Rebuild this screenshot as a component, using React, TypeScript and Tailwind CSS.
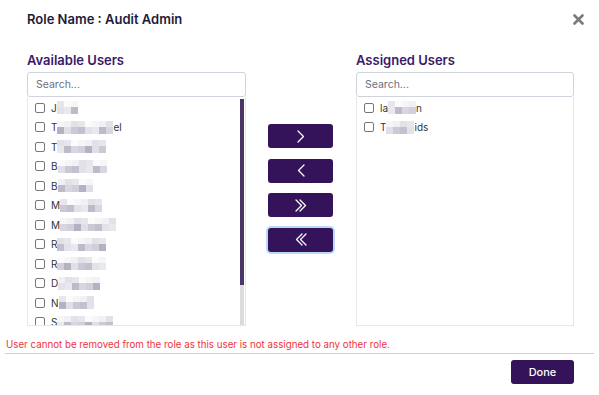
import React from "react";

const palette = ["#d2cfdb", "#e0dee6", "#c3c0cf", "#e9e8ee", "#d8d7e1", "#b5b1c3", "#ccc9d7", "#e3e2e9", "#bdbac9"];

function Mosaic({ cols, seed }: { cols: number; seed: number }) {
  const top: string[] = [];
  const bot: string[] = [];
  for (let i = 0; i < cols; i++) {
    top.push(["#f1f0f4", "#e8e6ed", "#f6f6f8", "#e3e1e8", "#fbfbfc"][(i * 3 + seed) % 5]);
    bot.push(palette[(i * 5 + seed * 7) % palette.length]);
  }
  return (
    <span className="inline-flex flex-col align-middle">
      <span className="flex">
        {top.map((c, i) => (
          <span key={i} className="block w-[7px] h-[6px]" style={{ background: c }} />
        ))}
      </span>
      <span className="flex">
        {bot.map((c, i) => (
          <span key={i} className="block w-[7px] h-[7px]" style={{ background: c }} />
        ))}
      </span>
    </span>
  );
}

function Box() {
  return <span className="block w-[10px] h-[10px] border border-[#767676] rounded-[2px] bg-white shrink-0" />;
}

type Row = { a: string; cols: number; tail?: string };

const left: Row[] = [
  { a: "J", cols: 3 },
  { a: "T", cols: 8, tail: "el" },
  { a: "T", cols: 7 },
  { a: "B", cols: 7 },
  { a: "B", cols: 5 },
  { a: "M", cols: 6 },
  { a: "M", cols: 8 },
  { a: "R", cols: 7 },
  { a: "R", cols: 7 },
  { a: "D", cols: 6 },
  { a: "N", cols: 5 },
  { a: "S", cols: 8 },
];

const right: Row[] = [
  { a: "la", cols: 4, tail: "n" },
  { a: "T", cols: 4, tail: "ids" },
];

function UserRow({ r, i }: { r: Row; i: number }) {
  return (
    <div className="flex items-center h-[19.5px] pl-[7px]">
      <Box />
      <span className="flex items-center ml-[6px] text-[10px] text-[#333] leading-none">
        <span>{r.a}</span>
        <Mosaic cols={r.cols} seed={i + 1} />
        {r.tail && <span>{r.tail}</span>}
      </span>
    </div>
  );
}

function Chevron({ dir, double }: { dir: "r" | "l"; double?: boolean }) {
  const one = dir === "r" ? "1,1 6.5,6.5 1,12" : "7,1 1.5,6.5 7,12";
  const w = double ? 12 : 8;
  return (
    <svg width={w} height="13" viewBox={`0 0 ${w} 13`} fill="none" stroke="white" strokeWidth="1.3" strokeLinecap="round" strokeLinejoin="round">
      <polyline points={one} />
      {double && <polyline points={one} transform="translate(4 0)" />}
    </svg>
  );
}

export default function App() {
  const font = { fontFamily: "Inter, 'Noto Sans', sans-serif" };
  return (
    <div className="w-[599px] h-[395px] bg-white overflow-hidden relative" style={font}>
      <div className="flex items-center justify-between pl-[27px] pr-[15px] pt-[10px] h-[30px]">
        <h1 className="text-[13px] font-semibold text-[#1d1b3a]">Role Name : Audit Admin</h1>
        <svg width="11" height="11" viewBox="0 0 11 11" className="mt-[-1px]">
          <path d="M1.5 1.5 L9.5 9.5 M9.5 1.5 L1.5 9.5" stroke="#7a7a7a" strokeWidth="2.6" strokeLinecap="round" />
        </svg>
      </div>

      <div className="flex pl-[27px] pt-[19px]">
        <div className="w-[219px] flex flex-col">
          <div className="text-[13px] font-semibold text-[#3a1a69] h-[23px] leading-[22px]">Available Users</div>
          <div className="h-[25px] border border-[#cfd4dc] rounded-[3px] flex items-center pl-[8px] text-[10.5px] text-[#6b7280]">Search...</div>
          <div className="h-[229px] border border-t-0 border-[#e5e7eb] flex overflow-hidden">
            <div className="flex-1 pt-[1px]">
              {left.map((r, i) => (
                <UserRow key={i} r={r} i={i} />
              ))}
            </div>
            <div className="w-[4px] mr-[1px] mt-[2px] bg-[#dcdcdc] h-[226px] flex flex-col">
              <div className="h-[186px] bg-[#4b3668]" />
            </div>
          </div>
        </div>

        <div className="w-[65px] ml-[22px] flex flex-col pt-[75px] gap-[10.5px]">
          <button className="h-[24px] rounded-[3px] bg-[#35135a] flex items-center justify-center">
            <Chevron dir="r" />
          </button>
          <button className="h-[24px] rounded-[3px] bg-[#35135a] flex items-center justify-center">
            <Chevron dir="l" />
          </button>
          <button className="h-[24px] rounded-[3px] bg-[#35135a] flex items-center justify-center">
            <Chevron dir="r" double />
          </button>
          <button className="h-[24px] rounded-[3px] bg-[#35135a] flex items-center justify-center ring-2 ring-[#bcd9fb]">
            <Chevron dir="l" double />
          </button>
        </div>

        <div className="w-[218px] ml-[23px] flex flex-col">
          <div className="text-[13px] font-semibold text-[#3a1a69] h-[23px] leading-[22px]">Assigned Users</div>
          <div className="h-[25px] border border-[#cfd4dc] rounded-[3px] flex items-center pl-[8px] text-[10.5px] text-[#6b7280]">Search...</div>
          <div className="h-[229px] border border-t-0 border-[#e5e7eb] pt-[1px]">
            {right.map((r, i) => (
              <UserRow key={i} r={r} i={i + 20} />
            ))}
          </div>
        </div>
      </div>

      <div className="pl-[6px] pt-[13px] text-[9.75px] text-[#ef3340] leading-[12px]">
        User cannot be removed from the role as this user is not assigned to any other role.
      </div>
      <div className="mx-[5px] mt-[2px] border-t border-[#cfcfcf]" />
      <div className="flex justify-end pr-[25px] pt-[6px]">
        <button className="w-[63px] h-[24px] rounded-[3px] bg-[#35135a] text-white text-[11px] font-medium">Done</button>
      </div>
    </div>
  );
}
